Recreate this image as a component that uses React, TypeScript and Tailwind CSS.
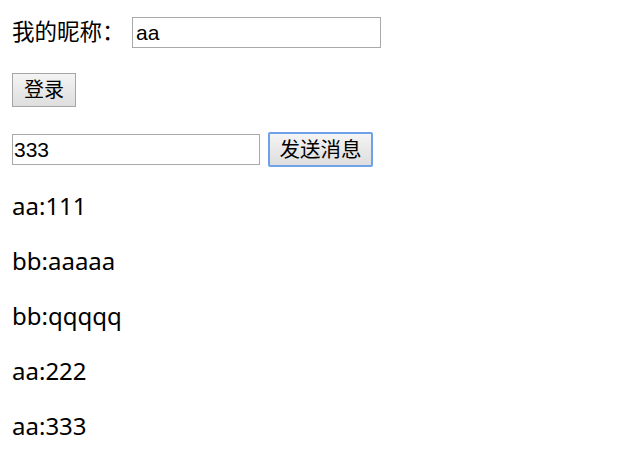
import { useState } from 'react';

type Message = {
  id: number;
  from: string;
  text: string;
};

const initialMessages: Message[] = [
  { id: 1, from: 'aa', text: '111' },
  { id: 2, from: 'bb', text: 'aaaaa' },
  { id: 3, from: 'bb', text: 'qqqqq' },
  { id: 4, from: 'aa', text: '222' },
  { id: 5, from: 'aa', text: '333' },
];

const font = "font-['Noto_Sans','Noto_Sans_CJK_SC',sans-serif]";

export default function App() {
  const [nick, setNick] = useState('aa');
  const [draft, setDraft] = useState('333');
  const [messages, setMessages] = useState<Message[]>(initialMessages);

  const send = () => {
    if (!draft.trim()) return;
    setMessages((m) => [...m, { id: m.length + 1, from: nick, text: draft }]);
  };

  return (
    <div className={`min-h-[472px] w-[621px] bg-white px-3 pt-[17px] text-black ${font}`}>
      <div className="flex h-[31px] items-center">
        <span className="w-[120px] text-[22.5px] leading-none">我的昵称：</span>
        <input
          className="h-[31px] w-[249px] border border-[#a9a9a9] px-[3px] font-['Liberation_Sans',sans-serif] text-[21px] outline-none"
          value={nick}
          onChange={(e) => setNick(e.target.value)}
        />
      </div>

      <button className="mt-[25px] flex h-[34px] w-[64px] items-center justify-center border border-[#a6a6a6] bg-gradient-to-b from-[#f4f4f4] to-[#dedede] text-[20px] leading-none">
        登录
      </button>

      <div className="mt-[25px] flex h-[35px] items-center">
        <input
          className="h-[31px] w-[248px] border border-[#a9a9a9] px-[1px] font-['Liberation_Sans',sans-serif] text-[21px] outline-none"
          value={draft}
          onChange={(e) => setDraft(e.target.value)}
        />
        <button
          onClick={send}
          className="ml-2 flex h-[35px] w-[105px] items-center justify-center rounded-[2px] border-2 border-[#6fa1e8] bg-gradient-to-b from-[#f4f4f4] to-[#dedede] text-[20.5px] leading-none"
        >
          发送消息
        </button>
      </div>

      <div className="mt-[24px] flex flex-col gap-[25px]">
        {messages.map((m) => (
          <p key={m.id} className="h-[30px] text-[24px] leading-[30px]">
            {m.from}:{m.text}
          </p>
        ))}
      </div>
    </div>
  );
}
